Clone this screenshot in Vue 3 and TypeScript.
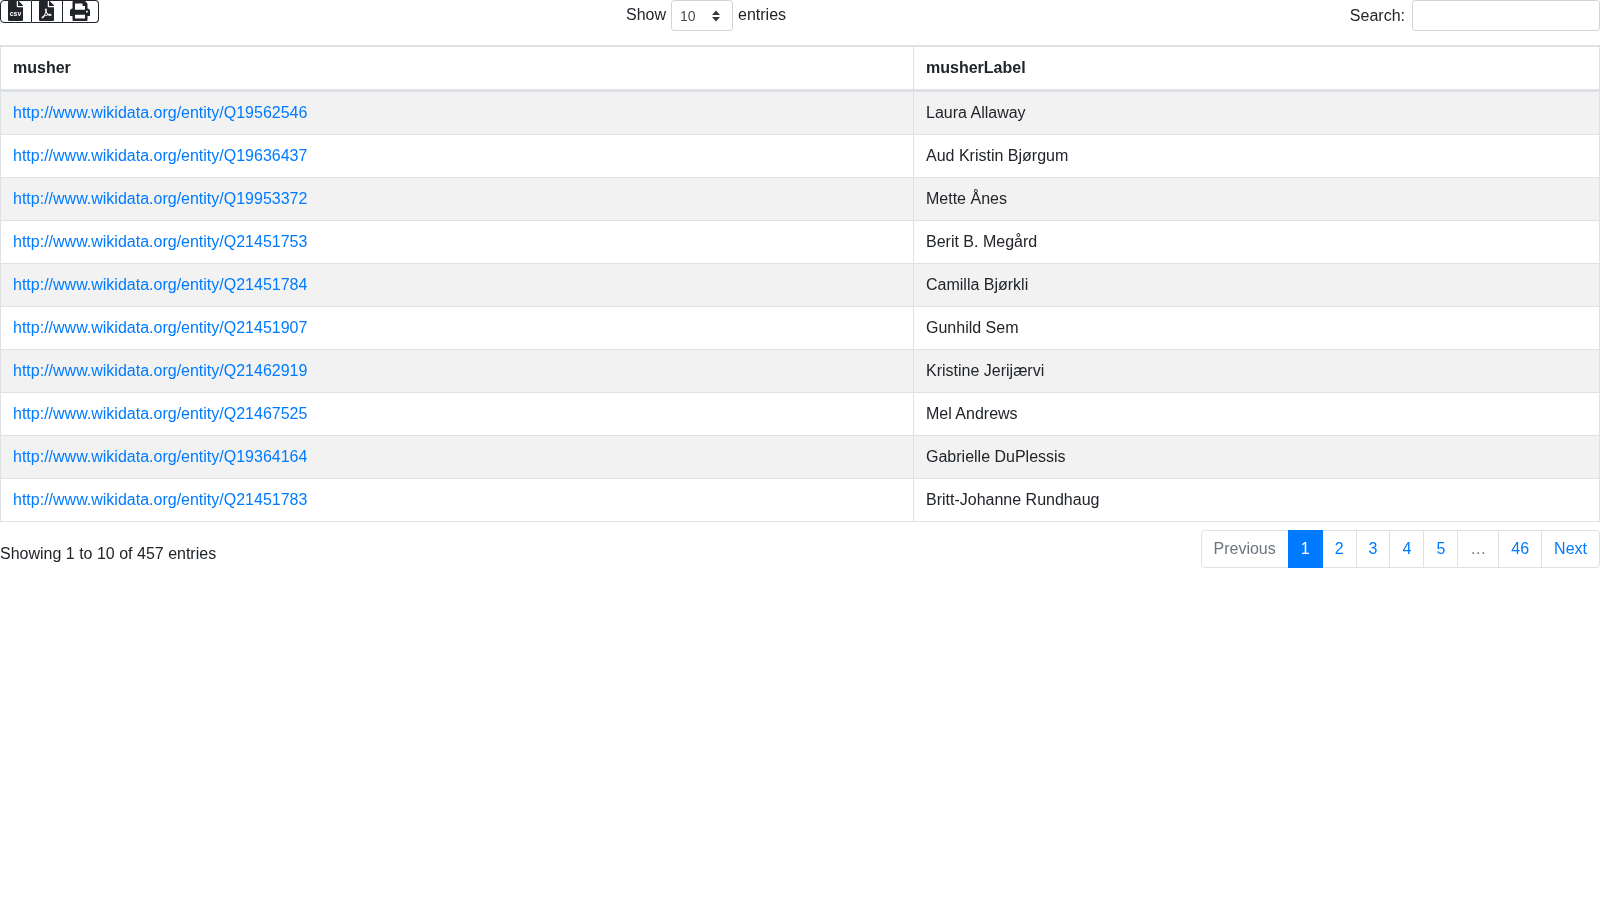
<script setup lang="ts">
const rows: [string, string][] = [
  ['Q19562546', 'Laura Allaway'],
  ['Q19636437', 'Aud Kristin Bjørgum'],
  ['Q19953372', 'Mette Ånes'],
  ['Q21451753', 'Berit B. Megård'],
  ['Q21451784', 'Camilla Bjørkli'],
  ['Q21451907', 'Gunhild Sem'],
  ['Q21462919', 'Kristine Jerijærvi'],
  ['Q21467525', 'Mel Andrews'],
  ['Q19364164', 'Gabrielle DuPlessis'],
  ['Q21451783', 'Britt-Johanne Rundhaug'],
]
const pages = ['2', '3', '4', '5']
</script>

<template>
  <div class="wrap">
    <div class="top">
      <div class="top-left">
        <div class="btns">
          <button class="ib first" type="button" aria-label="CSV">
            <svg viewBox="0 0 384 512" width="15" height="20"><path d="M224 136V0H24C10.700 0 0 10.700 0 24v464c0 13.300 10.700 24 24 24h336c13.300 0 24-10.700 24-24V160H248c-13.200 0-24-10.800-24-24zm160-14.100v6.100H256V0h6.100c6.400 0 12.500 2.500 17 7l97.900 98c4.500 4.500 7 10.600 7 16.900z" fill="#212529"/><text x="192" y="395" text-anchor="middle" font-size="175" font-weight="700" font-family="Liberation Sans, sans-serif" fill="#fff">csv</text></svg>
          </button>
          <button class="ib" type="button" aria-label="PDF">
            <svg viewBox="0 0 384 512" width="15" height="20"><path fill="#212529" d="M181.900 256.100c-5-16-4.900-46.900-2-46.900 8.400 0 7.600 36.900 2 46.900zm-1.700 47.200c-7.700 20.200-17.300 43.300-28.400 62.700 18.300-7 39-17.200 62.900-21.900-12.700-9.600-24.900-23.400-34.500-40.800zM86.100 428.100c0 .8 13.200-5.400 34.900-40.200-6.700 6.300-29.100 24.500-34.900 40.200zM248 160h136v328c0 13.300-10.700 24-24 24H24c-13.300 0-24-10.700-24-24V24C0 10.700 10.700 0 24 0h200v136c0 13.200 10.800 24 24 24zm-8 171.800c-20-12.200-33.300-29-42.700-53.800 4.500-18.500 11.600-46.600 6.200-64.200-4.700-29.400-42.400-26.500-47.800-6.800-5 18.300-.4 44.100 8.100 77-11.600 27.600-28.700 64.600-40.800 85.800-.1 0-.1.100-.2.100-27.100 13.900-73.600 44.500-54.500 68 5.600 6.900 16 10 21.500 10 17.900 0 35.700-18 61.100-61.800 25.800-8.500 54.100-19.100 79-23.200 21.700 11.800 47.100 19.500 64 19.500 29.200 0 31.200-32 19.700-43.400-13.900-13.600-54.300-9.700-73.600-7.200zM377 105L279 7c-4.500-4.500-10.600-7-17-7h-6v128h128v-6.100c0-6.300-2.500-12.400-7-16.900zm-74.100 255.300c4.100-2.700-2.500-11.900-42.800-9 37.100 15.800 42.800 9 42.800 9z"/></svg>
          </button>
          <button class="ib last" type="button" aria-label="Print">
            <svg viewBox="0 0 512 512" width="20" height="20"><path fill="#212529" d="M448 192V77.250c0-8.490-3.370-16.620-9.370-22.630L393.370 9.370c-6-6-14.140-9.370-22.630-9.370H96C78.330 0 64 14.330 64 32v160c-35.350 0-64 28.650-64 64v112c0 8.840 7.160 16 16 16h48v96c0 17.670 14.330 32 32 32h320c17.670 0 32-14.330 32-32v-96h48c8.840 0 16-7.160 16-16V256c0-35.350-28.650-64-64-64zm-64 256H128v-96h256v96zm0-224H128V64h192v48c0 8.840 7.160 16 16 16h48v96zm48 72c-13.250 0-24-10.750-24-24 0-13.260 10.750-24 24-24s24 10.740 24 24c0 13.250-10.750 24-24 24z"/></svg>
          </button>
        </div>
      </div>
      <div class="top-mid">
        <label class="len"><span class="len-t">Show</span>
          <span class="sel"><span>10</span>
            <svg viewBox="0 0 8 12" width="8" height="12"><path d="M4 0.500 8 5H0zM4 11.500 0 7H8z" fill="#343a40"/></svg>
          </span>
          <span class="len-t">entries</span></label>
      </div>
      <div class="top-right">
        <label class="search">Search:
          <span class="inp"></span>
        </label>
      </div>
    </div>

    <table class="tbl">
      <colgroup><col class="c1" /><col /></colgroup>
      <thead>
        <tr><th>musher</th><th>musherLabel</th></tr>
      </thead>
      <tbody>
        <tr v-for="r in rows" :key="r[0]">
          <td><a href="#">http://www.wikidata.org/entity/{{ r[0] }}</a></td>
          <td>{{ r[1] }}</td>
        </tr>
      </tbody>
    </table>

    <div class="foot">
      <div class="info">Showing 1 to 10 of 457 entries</div>
      <ul class="pag">
        <li class="dis">Previous</li>
        <li class="act">1</li>
        <li v-for="p in pages" :key="p" class="lnk">{{ p }}</li>
        <li class="dis">…</li>
        <li class="lnk">46</li>
        <li class="lnk">Next</li>
      </ul>
    </div>
  </div>
</template>

<style>
body { margin: 0; background: #fff; }
</style>

<style scoped>
.wrap {
  font-family: "Liberation Sans", Arial, sans-serif;
  font-size: 16px;
  line-height: 24px;
  color: #212529;
  width: 1600px;
  will-change: opacity;
}
.top { display: grid; grid-template-columns: 411px 590px 1fr; height: 45px; }
.btns { display: inline-flex; height: 23px; }
.ib {
  width: 31px;
  height: 23px;
  padding: 0 2px 0 0;
  margin: 0;
  border: 1px solid #212529;
  border-left: 0;
  background: #fff;
  display: flex;
  align-items: flex-start;
  justify-content: center;
  overflow: hidden;
}
.ib.first { border-left: 1px solid #212529; border-radius: 4px 0 0 4px; width: 32px; }
.ib.last { border-radius: 0 4px 4px 0; width: 36px; }
.top-mid { text-align: center; }
.len { display: inline-flex; align-items: flex-start; gap: 5px; height: 31px; }
.len-t { padding-top: 3px; }
.sel {
  width: 62px; height: 31px; box-sizing: border-box;
  border: 1px solid #ced4da; border-radius: 3.2px;
  display: flex; align-items: center; justify-content: space-between;
  padding: 0 12px 0 8px; font-size: 14px; color: #495057;
}
.top-right { text-align: right; }
.search { display: inline-flex; align-items: center; gap: 7px; height: 31px; }
.inp {
  width: 188px; height: 31px; box-sizing: border-box;
  border: 1px solid #ced4da; border-radius: 3.2px; background: #fff;
}
.tbl {
  width: 1600px;
  border-collapse: separate;
  border-spacing: 0;
  table-layout: fixed;
  border: 1px solid #dee2e6;
  box-sizing: border-box;
}
.c1 { width: 913px; }
.tbl th, .tbl td {
  border-top: 1px solid #dee2e6;
  border-right: 1px solid #dee2e6;
  padding: 9px 12px;
  text-align: left;
  vertical-align: middle;
}
.tbl th:last-child, .tbl td:last-child { border-right: 0; }
.tbl th { font-weight: 700; border-bottom: 2px solid #dee2e6; }
.tbl tbody tr:nth-child(odd) { background: #f2f2f2; }
a { color: #007bff; text-decoration: none; }
.foot { display: flex; justify-content: space-between; padding-top: 6px; }
.info { padding-top: 13.6px; }
.pag { display: flex; list-style: none; margin: 2px 0; padding: 0; }
.pag li {
  border: 1px solid #dee2e6;
  margin-left: -1px;
  padding: 6px 12px;
  height: 38px;
  box-sizing: border-box;
  background: #fff;
}
.pag li:first-child { border-radius: 4px 0 0 4px; margin-left: 0; }
.pag li:last-child { border-radius: 0 4px 4px 0; }
.pag .dis { color: #6c757d; }
.pag .lnk { color: #007bff; }
.pag .act { color: #fff; background: #007bff; border-color: #007bff; position: relative; z-index: 1; }
</style>
